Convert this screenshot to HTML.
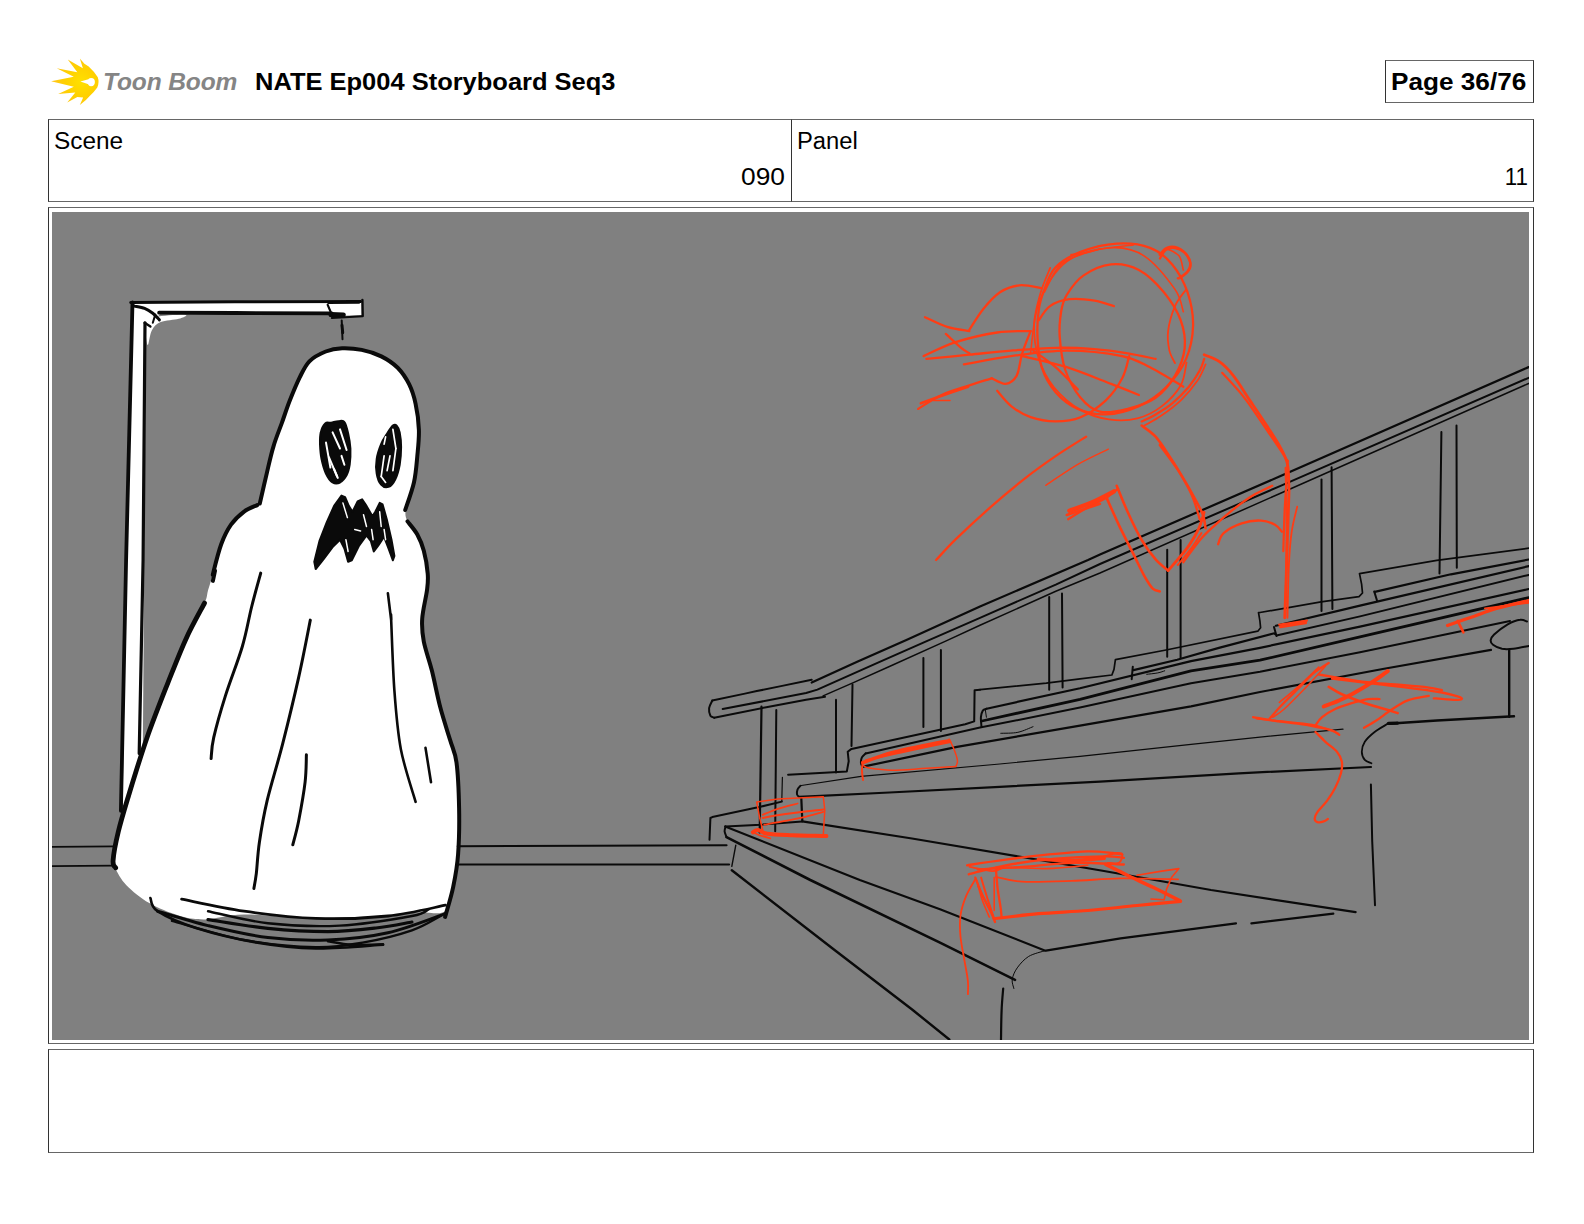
<!DOCTYPE html>
<html lang="en">
<head>
<meta charset="utf-8">
<title>NATE Ep004 Storyboard Seq3 - Page 36/76</title>
<style>
html,body{margin:0;padding:0;background:#fff;}
body{width:1584px;height:1224px;position:relative;overflow:hidden;font-family:"Liberation Sans",sans-serif;color:#000;}
.abs{position:absolute;box-sizing:border-box;}
.box{border:1px solid #333;border-top-color:#666;border-bottom-color:#666;background:#fff;}
.title{left:255px;top:68px;font-size:23.5px;font-weight:bold;line-height:28px;white-space:nowrap;transform:scaleX(1.084);transform-origin:0 0;}
.pagebox{left:1385px;top:60px;width:149px;height:43px;}
.pagebox span{position:absolute;left:5px;top:7px;font-size:24px;font-weight:bold;line-height:28px;white-space:nowrap;transform:scaleX(1.09);transform-origin:0 0;}
.lbl{font-size:23px;line-height:26px;white-space:nowrap;}
.val{font-size:23.5px;line-height:26px;white-space:nowrap;text-align:right;}
.logo-text{left:103px;top:66.5px;font-size:24.5px;font-style:italic;font-weight:bold;color:#858585;line-height:30px;white-space:nowrap;letter-spacing:-0.1px;}
svg{position:absolute;left:0;top:0;}
</style>
</head>
<body>
<svg class="abs" style="left:44px;top:52px" width="80" height="60" viewBox="0 0 1584 1188">
<defs><radialGradient id="lg" cx="0.62" cy="0.5" r="0.6"><stop offset="0" stop-color="#ffe000"/><stop offset="0.55" stop-color="#ffd000"/><stop offset="1" stop-color="#ffc51a"/></radialGradient></defs>
<path fill="url(#lg)" d="M710 130 L800 235 L885 285 Q1000 390 1065 500 Q1100 600 1055 705 Q990 800 900 875 L830 950 L710 1050 L775 900 L660 890 L460 1000 L620 800 L280 830 L590 690 L140 580 L590 490 L250 320 L660 400 L470 150 L770 320 Z"/>
<ellipse cx="935" cy="595" rx="72" ry="82" fill="#fff"/>
<path fill="#fff" d="M720 585 L880 540 L880 640 Z"/>
</svg>
<div class="abs logo-text">Toon Boom</div>
<div class="abs title">NATE Ep004 Storyboard Seq3</div>
<div class="abs box pagebox"><span>Page 36/76</span></div>

<div class="abs box" style="left:48px;top:119px;width:744px;height:83px;"></div>
<div class="abs box" style="left:791px;top:119px;width:743px;height:83px;"></div>
<div class="abs lbl" style="left:54px;top:127.5px;transform:scaleX(1.061);transform-origin:0 0;">Scene</div>
<div class="abs val" style="left:600px;width:185px;top:163.5px;transform:scaleX(1.12);transform-origin:100% 0;">090</div>
<div class="abs lbl" style="left:797px;top:127.5px;transform:scaleX(1.033);transform-origin:0 0;">Panel</div>
<div class="abs val" style="left:1340px;width:188px;top:163.5px;transform:scaleX(0.95);transform-origin:100% 0;">11</div>

<div class="abs box" style="left:48px;top:207px;width:1486px;height:837px;"></div>
<div class="abs" style="left:52px;top:212px;width:1477px;height:828px;background:#808080;"></div>
<div class="abs box" style="left:48px;top:1049px;width:1486px;height:104px;"></div>

<svg width="1584" height="1224" viewBox="0 0 1584 1224">
<defs><clipPath id="fr"><rect x="52" y="212" width="1477" height="828"/></clipPath></defs>
<g clip-path="url(#fr)" fill="none" stroke-linecap="round" stroke-linejoin="round">
<path d="M132.3 301.8 L361.7 299.9 L361.7 314.9 L332.3 316.2 L330.7 312.3 L160.7 312.9 L155.8 319.5 L146 325.4 L142.8 752.8 L122.5 808.4 L129.7 390.7Z" fill="#fff"/>
<path d="M146 325.4C147.4 320.7 149.3 318.9 155.8 317.2C162.4 315.4 181.4 314.6 185.3 314.9C189.1 315.2 182.8 317.6 178.7 318.8C174.6 320 165.2 320.2 160.7 322.1C156.3 324 154.1 326.4 151.9 330.3C149.7 334.1 148.7 345.8 147.7 345C146.7 344.2 144.7 330 146 325.4Z" fill="#fff"/>
<path d="M342.1 348.2C336.1 348.5 331.2 349.3 325.8 351.5C320.3 353.7 313.8 356.9 309.4 361.3C305.1 365.7 302.9 371.1 299.6 377.6C296.4 384.2 292.8 392.9 289.8 400.5C286.8 408.1 284.4 415.8 281.7 423.4C278.9 431 275.9 438.1 273.5 446.3C271 454.4 269.2 462.9 267 472.4C264.7 481.9 263.6 496.9 259.8 503.5C256 510 248.9 508.1 244.1 511.6C239.3 515.2 234.8 519.3 231 524.7C227.2 530.2 224.2 536.1 221.2 544.3C218.2 552.5 215.2 566.1 213 573.7C210.9 581.4 209.5 585.3 208.1 590.1C206.8 594.9 207.6 596.1 204.9 602.5C202.1 608.9 197.2 617.2 191.8 628.6C186.3 640.1 179.8 652.6 172.2 671.1C164.6 689.6 154.2 716.9 146 739.7C137.9 762.6 128.6 789.3 123.2 808.4C117.7 827.4 114.7 844.3 113.4 854.1C112 863.9 112.8 862 115 867.2C117.2 872.4 120.7 879.2 126.4 885.2C132.2 891.2 140.6 898.1 149.3 903.1C158 908.2 169.5 912.8 178.7 915.6C188 918.3 194 919.6 204.9 919.5C215.8 919.3 226.6 914.8 244.1 914.6C261.5 914.3 287.7 917.6 309.4 917.8C331.2 918.1 356.8 917.1 374.8 916.2C392.8 915.3 405.6 913.1 417.3 912.3C429 911.5 439.1 915.6 445.1 911.3C451.1 907.1 451.1 896.3 453.2 886.8C455.4 877.3 457.2 867.2 458.1 854.1C459.1 841 459.4 823.6 459.1 808.4C458.8 793.1 458 774.1 456.5 762.6C455 751.2 452.7 749 450 739.7C447.2 730.5 443.2 718.5 440.2 707.1C437.2 695.6 434.7 682 432 671.1C429.3 660.2 425.5 650.4 423.8 641.7C422.2 633 421.6 627.5 422.2 618.8C422.7 610.1 426.2 596.9 427.1 589.4C428 581.9 428.3 580.2 427.7 573.7C427.2 567.3 425.6 557.4 423.8 550.8C422.1 544.3 420 539.4 417.3 534.5C414.6 529.6 409.4 525.8 407.5 521.4C405.6 517.1 404.8 514.9 405.8 508.4C406.9 501.8 412.1 490.9 414 482.2C415.9 473.5 416.5 464.8 417.3 456.1C418.1 447.4 419.2 438.6 418.9 429.9C418.6 421.2 417.3 411.4 415.6 403.8C414 396.2 412.1 390.2 409.1 384.2C406.1 378.2 402.3 372.5 397.7 367.8C393 363.2 387.3 359.4 381.3 356.4C375.3 353.4 368.3 351.2 361.7 349.9C355.2 348.5 348.1 348 342.1 348.2Z" fill="#fff"/>
<path d="M132.5 302.5 L126.1 560 L120.9 810.8" fill="none" stroke="#0a0a0a" stroke-width="3.8"/>
<path d="M145 322.8 L143.1 560 L139.2 753.4" fill="none" stroke="#0a0a0a" stroke-width="3.2"/>
<path d="M130.7 302.5 L234.9 301.8 L360.6 301.5" fill="none" stroke="#0a0a0a" stroke-width="3"/>
<path d="M328.5 302.8 L358.9 302.5" fill="none" stroke="#0a0a0a" stroke-width="2.6"/>
<path d="M159.1 312.7 L234.9 313 L331.8 313.3" fill="none" stroke="#0a0a0a" stroke-width="3.8"/>
<path d="M331 314.6 L343.3 315" fill="none" stroke="#0a0a0a" stroke-width="5"/>
<path d="M331.8 317.9 L362.7 316.3" fill="none" stroke="#0a0a0a" stroke-width="2"/>
<path d="M362.4 299.9 L362.7 315.5" fill="none" stroke="#0a0a0a" stroke-width="2.4"/>
<path d="M327.7 304.8 L331.8 314.6" fill="none" stroke="#0a0a0a" stroke-width="2.2"/>
<path d="M134.4 306.1C136.1 306.5 141.6 307.2 144.6 308.4C147.7 309.6 150.4 311.4 152.8 313.3C155.3 315.2 158.3 318.8 159.4 319.9" fill="none" stroke="#0a0a0a" stroke-width="3"/>
<path d="M155.3 314.6 L152.8 322.8" fill="none" stroke="#0a0a0a" stroke-width="2"/>
<path d="M144.6 322.8 L150.4 326.5" fill="none" stroke="#0a0a0a" stroke-width="2.4"/>
<path d="M341.7 320.4 L342.5 339.3" fill="none" stroke="#0a0a0a" stroke-width="2"/>
<path d="M342 325.3 L342.7 332.7" fill="none" stroke="#0a0a0a" stroke-width="3"/>
<path d="M259.8 503.5C261 498.3 264.7 481.9 267 472.4C269.2 462.9 271 454.4 273.5 446.3C275.9 438.1 278.9 431 281.7 423.4C284.4 415.8 286.8 408.1 289.8 400.5C292.8 392.9 296.4 384.2 299.6 377.6C302.9 371.1 305.1 365.7 309.4 361.3C313.8 356.9 320.3 353.7 325.8 351.5C331.2 349.3 336.1 348.5 342.1 348.2C348.1 348 355.2 348.5 361.7 349.9C368.3 351.2 375.3 353.4 381.3 356.4C387.3 359.4 393 363.2 397.7 367.8C402.3 372.5 406.1 378.2 409.1 384.2C412.1 390.2 414 396.2 415.6 403.8C417.3 411.4 418.6 421.2 418.9 429.9C419.2 438.6 418.1 447.4 417.3 456.1C416.5 464.8 416 473.2 414 482.2C412 491.2 406.7 505.4 405.2 510" fill="none" stroke="#0a0a0a" stroke-width="4"/>
<path d="M257.2 505.1C255 506.2 248.4 508.4 244.1 511.6C239.7 514.9 234.8 519.3 231 524.7C227.2 530.2 224.2 536.1 221.2 544.3C218.2 552.5 214.1 569.4 213 573.7C212 578.1 215 569.3 215 570.5C214.9 571.6 213.2 579.2 212.9 580.9" fill="none" stroke="#0a0a0a" stroke-width="4"/>
<path d="M204.5 603.1C201.5 609 192.3 625.1 186.2 638.4C180.1 651.7 174.5 666.3 167.9 682.8C161.4 699.4 153.6 719 147 737.7C140.5 756.4 133.5 779.5 128.7 795.2C124 810.8 120.9 820.9 118.3 831.8C115.7 842.6 113.5 854.5 113.1 860.5C112.6 866.5 115.2 866.6 115.7 867.8" fill="none" stroke="#0a0a0a" stroke-width="4.8"/>
<path d="M407.5 521.4C409.1 523.6 414.6 529.6 417.3 534.5C420 539.4 422.1 544.3 423.8 550.8C425.6 557.4 427.2 567.3 427.7 573.7C428.3 580.2 428 581.9 427.1 589.4C426.2 596.9 422.7 610.1 422.2 618.8C421.6 627.5 422.2 633 423.8 641.7C425.5 650.4 429.3 660.2 432 671.1C434.7 682 437.2 695.6 440.2 707.1C443.2 718.5 447.2 730.5 450 739.7C452.7 749 455 751.2 456.5 762.6C458 774.1 458.8 793.1 459.1 808.4C459.4 823.6 459.1 841 458.1 854.1C457.2 867.2 455.4 876.3 453.2 886.8C451.1 897.3 446.4 911.9 445.1 916.9" fill="none" stroke="#0a0a0a" stroke-width="4"/>
<path d="M181.6 899.2C192 901.2 221.6 908 244 911.2C266.3 914.4 291.9 917.6 315.9 918.4C339.9 919.2 366.3 918.2 387.9 916C409.5 913.8 435.9 907 445.5 905.2" fill="none" stroke="#0a0a0a" stroke-width="2.8"/>
<path d="M208 911.2C218 913.2 246 920.8 267.9 923.2C289.9 925.6 315.9 926.8 339.9 925.6C363.9 924.4 397.1 918.7 411.9 916C426.7 913.3 425.9 910.4 428.7 909.3" fill="none" stroke="#0a0a0a" stroke-width="2.4"/>
<path d="M208 919.6C218 921 248 926.4 267.9 928.4C287.9 930.4 309.9 931.6 327.9 931.6C345.9 931.5 361.9 929.6 375.9 928C389.9 926.4 405.9 923 411.9 922" fill="none" stroke="#0a0a0a" stroke-width="3.2"/>
<path d="M150.4 898C151.6 900.2 150 906.2 157.6 911.2C165.2 916.2 179.6 922.8 196 928C212.4 933.2 236 939 256 942.4C275.9 945.8 294.7 948 315.9 948.4C337.1 948.8 371.9 945.4 383.1 944.8" fill="none" stroke="#0a0a0a" stroke-width="2.6"/>
<path d="M157.6 911.2C166 913.6 189.6 921.2 208 925.6C226.4 930 248 935.2 267.9 937.6C287.9 940 307.9 940.8 327.9 940C347.9 939.2 368.3 937.2 387.9 932.8C407.5 928.4 435.9 916.8 445.5 913.6" fill="none" stroke="#0a0a0a" stroke-width="3"/>
<path d="M172 920.8C184 924 220 935.6 244 940C267.9 944.4 295.9 946.8 315.9 947.2C335.9 947.6 347.9 945.2 363.9 942.4C379.9 939.6 399.1 934.8 411.9 930.4C424.7 926 435.9 918.4 440.7 916" fill="none" stroke="#0a0a0a" stroke-width="2.4"/>
<path d="M327.9 941.2C331.9 941.8 342.7 944.2 351.9 944.8C361.1 945.3 377.9 944.4 383.1 944.3" fill="none" stroke="#0a0a0a" stroke-width="2.4"/>
<path d="M260.7 573.1C259.2 578.7 254.6 594.8 251.6 607C248.5 619.2 246.8 631.4 242.4 646.2C238.1 661 230.2 680.6 225.4 695.9C220.6 711.1 216.1 727.2 213.7 737.7C211.3 748.1 211.5 755.1 211.1 758.6" fill="none" stroke="#0a0a0a" stroke-width="3"/>
<path d="M310.3 620.1C308.4 629.7 303.2 657.1 298.6 677.6C294 698.1 288.1 722.4 282.9 742.9C277.7 763.4 271.2 783.8 267.2 800.4C263.3 816.9 261.2 830 259.4 842.2C257.6 854.4 257.2 865.9 256.3 873.6C255.3 881.3 254.3 886 253.9 888.4" fill="none" stroke="#0a0a0a" stroke-width="3"/>
<path d="M387.9 593.3C388.4 597.7 390.6 615.2 391.1 619.5C391.7 623.7 390.6 606.9 391.1 618.8C391.7 630.7 392.8 668.9 394.4 690.7C396 712.5 397.4 731 400.9 749.5C404.5 768.1 413.2 793.1 415.6 801.8" fill="none" stroke="#0a0a0a" stroke-width="2.6"/>
<path d="M306.4 754.7C306.2 759.2 306.4 771 305.1 782.1C303.8 793.2 300.6 810.8 298.6 821.3C296.5 831.8 293.8 840.9 292.8 844.8" fill="none" stroke="#0a0a0a" stroke-width="3"/>
<path d="M425.5 747.9 L431 782.2" fill="none" stroke="#0a0a0a" stroke-width="2.6"/>
<path d="M325.3 423.5C323.6 425.1 321.7 428.9 320.9 432.4C320 435.8 320 439.7 320.1 444.1C320.3 448.5 320.6 453.9 321.6 458.8C322.6 463.7 324.2 469.6 326 473.5C327.9 477.5 330.3 480.9 332.6 482.4C335 483.8 337.7 483.6 340 482.4C342.3 481.1 345 477.9 346.6 475C348.2 472.1 348.9 469.1 349.6 464.7C350.2 460.3 350.5 453.7 350.3 448.5C350 443.4 349.1 438.2 348.1 433.8C347.1 429.4 346 424.1 344.4 422.1C342.8 420 340.7 421.2 338.5 421.3C336.3 421.4 333.4 422.4 331.2 422.8C329 423.2 327 421.9 325.3 423.5Z" fill="#0a0a0a" stroke="#0a0a0a" stroke-width="2.2"/>
<path d="M392.9 425.7C391.3 427.1 389 430.8 387.1 433.8C385.1 436.9 382.9 440 381.2 444.1C379.5 448.3 377.5 453.9 376.8 458.8C376 463.7 376 469.2 376.8 473.5C377.5 477.8 379.2 482.4 381.2 484.6C383.1 486.8 386.2 487.6 388.5 486.8C390.9 485.9 393.3 483.1 395.1 479.4C397 475.7 398.6 470.1 399.6 464.7C400.5 459.3 401 452.5 401 447.1C401 441.7 400.3 435.9 399.6 432.4C398.8 428.8 397.7 426.8 396.6 425.7C395.5 424.6 394.5 424.4 392.9 425.7Z" fill="#0a0a0a" stroke="#0a0a0a" stroke-width="2.2"/>
<path d="M341.5 495.6 L334.1 505.9 L326.8 522.1 L319.4 541.2 L314.3 561.8 L315.7 569.1 L323.8 558.8 L332.6 547.1 L340 539.7 L344.4 548.5 L348.1 561.8 L351.8 560.3 L359.1 545.6 L366.5 535.3 L370.9 541.2 L373.8 551.5 L378.2 545.6 L384.1 536.8 L388.5 548.5 L392.9 560.3 L394.4 555.9 L391.5 539.7 L387.1 520.6 L382.6 504.4 L379.7 502.9 L375.3 511.8 L372.4 516.2 L366.5 505.9 L362.1 499.3 L357.6 501.5 L352.5 511.8 L348.8 505.9 L345.1 497.1Z" fill="#0a0a0a" stroke="#0a0a0a" stroke-width="2"/>
<path d="M326 442.6 L330.4 467.6" fill="none" stroke="#fff" stroke-width="2"/>
<path d="M329 457.4 L337.1 476.5" fill="none" stroke="#fff" stroke-width="2"/>
<path d="M332.6 432.4 L340 448.5" fill="none" stroke="#fff" stroke-width="2"/>
<path d="M340 429.4 L346.6 450" fill="none" stroke="#fff" stroke-width="2"/>
<path d="M341.5 455.9 L344.4 464.7" fill="none" stroke="#fff" stroke-width="2"/>
<path d="M334.1 469.1 L337.8 477.9" fill="none" stroke="#fff" stroke-width="2"/>
<path d="M384.1 455.9 L381.2 476.5" fill="none" stroke="#fff" stroke-width="1.7"/>
<path d="M381.2 476.5 L385.6 482.4" fill="none" stroke="#fff" stroke-width="1.7"/>
<path d="M390 455.9 L387.1 470.6" fill="none" stroke="#fff" stroke-width="1.7"/>
<path d="M392.9 429.4 L395.9 448.5" fill="none" stroke="#fff" stroke-width="1.7"/>
<path d="M395.9 448.5 L392.9 470.6" fill="none" stroke="#fff" stroke-width="1.7"/>
<path d="M385.6 436.8 L384.1 444.1" fill="none" stroke="#fff" stroke-width="1.7"/>
<path d="M342.9 502.9 L347.4 517.6" fill="none" stroke="#fff" stroke-width="1.5"/>
<path d="M345.9 539.7 L348.1 551.5" fill="none" stroke="#fff" stroke-width="1.5"/>
<path d="M363.5 514.7 L366.5 526.5" fill="none" stroke="#fff" stroke-width="1.5"/>
<path d="M371.6 529.4 L373.1 539.7" fill="none" stroke="#fff" stroke-width="1.5"/>
<path d="M379.7 511.8 L381.2 526.5" fill="none" stroke="#fff" stroke-width="1.5"/>
<path d="M354.7 529.4 L360.6 530.9" fill="none" stroke="#fff" stroke-width="1.5"/>
<path d="M384.1 529.4 L385.6 539.7" fill="none" stroke="#fff" stroke-width="1.5"/>
<path d="M51.9 846.9 L115 846.3" fill="none" stroke="#0a0a0a" stroke-width="1.8"/>
<path d="M51.9 866.2 L113.4 865.6" fill="none" stroke="#0a0a0a" stroke-width="1.8"/>
<path d="M457.7 846.2 L591.5 845.7 L726.6 845.2" fill="none" stroke="#0a0a0a" stroke-width="2"/>
<path d="M457.7 864.6 L591.5 864.6 L729.1 864.6" fill="none" stroke="#0a0a0a" stroke-width="2"/>
<path d="M712.3 700.6C719.7 699 740.2 694.6 756.8 691.1C773.4 687.7 802.6 681.7 811.7 679.8" fill="none" stroke="#0a0a0a" stroke-width="2"/>
<path d="M811.7 682.6 L857.2 661.8 L906.4 640 L980 606.4 L1088 560 L1100 554.5 L1280 476.3 L1528.6 367.1" fill="none" stroke="#0a0a0a" stroke-width="2.2"/>
<path d="M712.3 700.6C711.8 701.9 709.4 705.7 709.1 708.2C708.8 710.7 709.6 714.2 710.4 715.8C711.3 717.3 713.6 717.3 714.2 717.7" fill="none" stroke="#0a0a0a" stroke-width="2"/>
<path d="M722.7 709.1 L806.1 693 L817.4 689.6 L878 662.7 L927.3 640.9 L980 617.8 L1055.8 584.6 L1100 564 L1280 486.1 L1528.6 377.8" fill="none" stroke="#0a0a0a" stroke-width="2"/>
<path d="M714.2 717.7 L766.3 707.2 L806.1 699.7 L825 696.8" fill="none" stroke="#0a0a0a" stroke-width="2"/>
<path d="M823.1 695.9 L853.4 682.6 L889.4 666.5 L946.2 640.9 L980 625.3 L1055.8 591.2 L1100 573 L1280 493.5 L1528.6 383.5" fill="none" stroke="#0a0a0a" stroke-width="1.5"/>
<path d="M761.5 706.5 L759.7 832.5" fill="none" stroke="#0a0a0a" stroke-width="2.2"/>
<path d="M776.3 710 L775.2 831.3" fill="none" stroke="#0a0a0a" stroke-width="2"/>
<path d="M836 699.7 L836 772.6" fill="none" stroke="#0a0a0a" stroke-width="2"/>
<path d="M852.5 684.5 L851.5 746" fill="none" stroke="#0a0a0a" stroke-width="2"/>
<path d="M923.4 658 L923.4 727" fill="none" stroke="#0a0a0a" stroke-width="2"/>
<path d="M940.9 650 L940.9 731" fill="none" stroke="#0a0a0a" stroke-width="2"/>
<path d="M1049.2 597 L1049.2 689.7" fill="none" stroke="#0a0a0a" stroke-width="2"/>
<path d="M1062 593.6 L1062.6 687.5" fill="none" stroke="#0a0a0a" stroke-width="2"/>
<path d="M1167.2 549.7 L1167.2 656.7" fill="none" stroke="#0a0a0a" stroke-width="2"/>
<path d="M1180.6 540 L1180.6 658" fill="none" stroke="#0a0a0a" stroke-width="2"/>
<path d="M1321.5 479.6 L1321.5 611" fill="none" stroke="#0a0a0a" stroke-width="2"/>
<path d="M1331.6 467.3 L1332.4 609" fill="none" stroke="#0a0a0a" stroke-width="2"/>
<path d="M1441.4 432 L1439.5 573.5" fill="none" stroke="#0a0a0a" stroke-width="2"/>
<path d="M1456.5 425.4 L1456.8 567.8" fill="none" stroke="#0a0a0a" stroke-width="2"/>
<path d="M1528.8 548.2 L1436.8 560.3 L1359.5 573.6 L1361.6 584.2 L1362.5 593 L1359 596.6 L1321 601.9 L1260 612.5 L1258.5 612.5 L1259.9 620.8 L1260.6 627.8 L1257.8 631.2 L1166.1 650 L1115.4 659.7 L1114 669.4 L1111.9 675 L1080 678.9 L1046.3 683.1 L980 689.7" fill="none" stroke="#0a0a0a" stroke-width="1.7"/>
<path d="M980 689.7 L974.6 690.2 L974.2 721.4 L965.2 724.3 L851.5 748.9 L847.7 751.7 L848.7 761.2 L846.8 771.6 L788.1 774.8" fill="none" stroke="#0a0a0a" stroke-width="2"/>
<path d="M782.4 777.3 L781.8 801" fill="none" stroke="#0a0a0a" stroke-width="1.2"/>
<path d="M781.8 801.6 L756.8 807.6 L712.3 817.1 L710.4 818 L709.5 839.8" fill="none" stroke="#0a0a0a" stroke-width="2"/>
<path d="M1132.8 666.7 L1131.7 679.2" fill="none" stroke="#0a0a0a" stroke-width="2"/>
<path d="M1274 627 L1276.5 636" fill="none" stroke="#0a0a0a" stroke-width="2"/>
<path d="M1374.2 591.4 L1377 600.5" fill="none" stroke="#0a0a0a" stroke-width="2"/>
<path d="M1133.5 670.1 L1177.2 659.7 L1218.9 647.9 L1274.4 633.3 L1275 634" fill="none" stroke="#0a0a0a" stroke-width="2.2"/>
<path d="M1276.5 635.5 L1360 616.4 L1528.8 574.9" fill="none" stroke="#0a0a0a" stroke-width="2"/>
<path d="M1275.9 625.7 L1360 605.6 L1528.8 566.1" fill="none" stroke="#0a0a0a" stroke-width="2.2"/>
<path d="M1374.8 591.9 L1450.9 574.3 L1528.8 559.5" fill="none" stroke="#0a0a0a" stroke-width="2.2"/>
<path d="M986.6 708.7 L1080 688.2 L1191 661.1 L1260 647.8 L1360 626.6 L1528.8 589" fill="none" stroke="#0a0a0a" stroke-width="2.2"/>
<path d="M981.9 721 L1080 699.3 L1191 670.8 L1260 660.2 L1360 636.8 L1528.8 597.6" fill="none" stroke="#0a0a0a" stroke-width="2.8"/>
<path d="M865.7 753.5 L980 727.6 L1080 707.6 L1191 683.3 L1260 671.7 L1360 652.2 L1510 620.9" fill="none" stroke="#0a0a0a" stroke-width="2"/>
<path d="M863 766.7 L957 746.8 L1080 725.7 L1191 706.3 L1260 692 L1382.7 669 L1491 649.9" fill="none" stroke="#0a0a0a" stroke-width="2.2"/>
<path d="M801.3 785.5 L861 776.4 L999.8 764 L1080 756.3 L1191 744.4 L1260 737.1 L1343 729.1" fill="none" stroke="#0a0a0a" stroke-width="1.2"/>
<path d="M799.4 796.8 L889.4 792.5 L999.8 786.8 L1100 781.7 L1238.9 773.3 L1371 767" fill="none" stroke="#0a0a0a" stroke-width="2.2"/>
<path d="M800.4 785.8C799.9 786.5 798.1 788.2 797.5 789.6C797 791 796.7 793.1 797 794.4C797.3 795.6 799 796.7 799.4 797.2" fill="none" stroke="#0a0a0a" stroke-width="2"/>
<path d="M865.7 753.3C865.1 754 862.7 755.8 861.9 757.4C861.1 759.1 860.8 761.5 861 763.1C861.1 764.7 862.6 766.3 862.9 766.9" fill="none" stroke="#0a0a0a" stroke-width="2"/>
<path d="M986.6 708.7C986 709 983.8 709.1 982.8 710.6C981.9 712 981.2 714.5 980.9 717.2C980.7 719.9 981.4 725.1 981.5 726.7" fill="none" stroke="#0a0a0a" stroke-width="2"/>
<path d="M985.3 709.6 L986.4 717.2" fill="none" stroke="#0a0a0a" stroke-width="1"/>
<path d="M1000.8 733.3C1003.7 733.1 1012.5 733.5 1017.9 732.3C1023.2 731.2 1030.5 727.6 1033 726.7" fill="none" stroke="#0a0a0a" stroke-width="1"/>
<path d="M1146.7 674.3C1148.5 674.1 1154.8 673.5 1157.8 672.9C1160.8 672.3 1163.6 671.2 1164.7 670.8" fill="none" stroke="#0a0a0a" stroke-width="1"/>
<path d="M801.3 798.1 L802.3 820.9" fill="none" stroke="#0a0a0a" stroke-width="2.2"/>
<path d="M725.6 826.6 L760.6 824.7 L802.3 821.4" fill="none" stroke="#0a0a0a" stroke-width="2"/>
<path d="M802.3 821.4 L912 838.5 L1022 857 L1104 871 L1211 890 L1355.6 912.2" fill="none" stroke="#0a0a0a" stroke-width="2.2"/>
<path d="M725.6 826.6C725.4 827.3 724.5 829.6 724.6 831.3C724.8 833 726.2 836 726.5 837" fill="none" stroke="#0a0a0a" stroke-width="2"/>
<path d="M725.2 826.5 L859.8 880 L940 909.3 L1044.7 950.4" fill="none" stroke="#0a0a0a" stroke-width="2.2"/>
<path d="M1045.9 950.7 L1120.6 938.4 L1236 923.3" fill="none" stroke="#0a0a0a" stroke-width="2.2"/>
<path d="M1251.4 923.3 L1333.3 913.6" fill="none" stroke="#0a0a0a" stroke-width="2.2"/>
<path d="M726.5 837.1 L810.3 880 L940 942.6 L1015 979.8" fill="none" stroke="#0a0a0a" stroke-width="2.6"/>
<path d="M731.8 870.3 L832.6 948.5 L912.1 1009.5 L949.3 1039.5" fill="none" stroke="#0a0a0a" stroke-width="2.4"/>
<path d="M735.8 845.1 L731.8 866.3" fill="none" stroke="#0a0a0a" stroke-width="1.4"/>
<path d="M1045.1 950.7C1042.4 951.6 1033.3 953.6 1028.7 956.4C1024 959.3 1019.9 964.1 1017.2 967.9C1014.4 971.8 1012.8 976 1012.2 979.4C1011.7 982.8 1013.6 987 1013.9 988.5" fill="none" stroke="#0a0a0a" stroke-width="1"/>
<path d="M1003.2 988.5C1002.9 992.2 1001.9 1002 1001.6 1010.6C1001.2 1019.2 1001.1 1035.1 1001 1040" fill="none" stroke="#0a0a0a" stroke-width="2.2"/>
<path d="M1527 621.5C1525.9 621.2 1523.4 619.3 1520.2 619.8C1517 620.2 1512.1 621.9 1507.7 624.3C1503.4 626.8 1496.9 631.9 1494.1 634.5C1491.2 637.2 1490.9 638.5 1490.7 640.2C1490.5 641.9 1491.1 643.4 1493 644.8C1494.8 646.2 1498.6 648.1 1502 648.8C1505.5 649.4 1509 649.2 1513.4 648.8C1517.9 648.3 1526.2 646.4 1528.8 645.9" fill="none" stroke="#0a0a0a" stroke-width="2"/>
<path d="M1509.2 650.5 L1509.2 716.8" fill="none" stroke="#0a0a0a" stroke-width="2.4"/>
<path d="M1514 716.2 L1437 720.5 L1387.8 723.7" fill="none" stroke="#0a0a0a" stroke-width="2.4"/>
<path d="M1387.8 723.7C1385.6 725.1 1378.5 728.9 1374.6 732C1370.8 735 1366.9 738.5 1364.8 741.8C1362.7 745.1 1361.8 748.6 1361.8 751.7C1361.8 754.7 1363.2 758 1364.8 759.9C1366.4 761.8 1370.3 762.6 1371.4 763.2" fill="none" stroke="#0a0a0a" stroke-width="1.8"/>
<path d="M1370.9 784.5 L1372.2 841 L1375 905.3" fill="none" stroke="#0a0a0a" stroke-width="2"/>
<path d="M1388.6 723.4 L1397.6 723.1" fill="none" stroke="#0a0a0a" stroke-width="3.2"/>
<path d="M1044.4 289.4C1047.2 282.5 1049.5 273.5 1055.6 267.2C1061.6 261 1070.4 255.9 1080.6 251.9C1090.7 248 1105.1 244.3 1116.7 243.6C1128.2 242.9 1140.7 244.3 1150 247.8C1159.3 251.2 1166 257 1172.2 264.4C1178.5 271.9 1184 282 1187.5 292.2C1191 302.4 1193.3 314.4 1193.1 325.6C1192.8 336.7 1190.5 348.7 1186.1 358.9C1181.7 369.1 1174.5 378.8 1166.7 386.7C1158.8 394.5 1149.1 401.5 1138.9 406.1C1128.7 410.7 1115.7 414 1105.6 414.4C1095.4 414.9 1086.1 412.6 1077.8 408.9C1069.4 405.2 1061.6 399.2 1055.6 392.2C1049.5 385.3 1044.7 376.5 1041.7 367.2C1038.7 358 1038 346.4 1037.5 336.7C1037 326.9 1037.7 316.8 1038.9 308.9C1040 301 1041.7 296.4 1044.4 289.4Z" fill="none" stroke="#ff3c14" stroke-width="2.3"/>
<path d="M1066.7 295C1070.4 289 1075.9 280.6 1083.3 275.6C1090.7 270.5 1101.9 265.4 1111.1 264.4C1120.4 263.5 1130.1 265.4 1138.9 270C1147.7 274.6 1156.9 283.9 1163.9 292.2C1170.8 300.6 1177.1 310.7 1180.6 320C1184 329.3 1185.6 338.5 1184.7 347.8C1183.8 357 1179.9 367.2 1175 375.6C1170.1 383.9 1163.4 392.2 1155.6 397.8C1147.7 403.3 1137 406.6 1127.8 408.9C1118.5 411.2 1107.9 413.5 1100 411.7C1092.1 409.8 1086.3 404.7 1080.6 397.8C1074.8 390.8 1068.8 380.2 1065.3 370C1061.8 359.8 1060.4 346.4 1059.7 336.7C1059 326.9 1060 318.6 1061.1 311.7C1062.3 304.7 1063 301 1066.7 295Z" fill="none" stroke="#ff3c14" stroke-width="2.3"/>
<path d="M1030.6 353.3C1031.9 345 1032.9 318.6 1038.9 303.3C1044.9 288.1 1054.6 270.9 1066.7 261.7C1078.7 252.4 1098.1 248.7 1111.1 247.8C1124.1 246.9 1133.8 249.2 1144.4 256.1C1155.1 263.1 1168.5 280.2 1175 289.4C1181.5 298.7 1181.9 308 1183.3 311.7" fill="none" stroke="#ff3c14" stroke-width="1.6"/>
<path d="M1186.1 289.4C1184.3 292.2 1178 299.2 1175 306.1C1172 313.1 1169 323.7 1168.1 331.1C1167.1 338.5 1168.3 345.2 1169.4 350.6C1170.6 355.9 1174.1 361 1175 363.1" fill="none" stroke="#ff3c14" stroke-width="1.8"/>
<path d="M1044.4 292.2C1047.2 287.6 1052.8 271.4 1061.1 264.4C1069.4 257.5 1082.4 253.8 1094.4 250.6C1106.5 247.3 1126.9 245.9 1133.3 245" fill="none" stroke="#ff3c14" stroke-width="1.5"/>
<path d="M1159.7 254.7C1160.9 253.6 1163.7 248.9 1166.7 247.8C1169.7 246.6 1174.3 246.4 1177.8 247.8C1181.2 249.2 1185.4 252.9 1187.5 256.1C1189.6 259.4 1191 264 1190.3 267.2C1189.6 270.5 1185.4 273.7 1183.3 275.6C1181.2 277.4 1178.7 277.9 1177.8 278.3" fill="none" stroke="#ff3c14" stroke-width="2.3"/>
<path d="M1168.1 249.2C1169.9 250.3 1176.6 252.6 1179.2 256.1C1181.7 259.6 1182.6 267.7 1183.3 270" fill="none" stroke="#ff3c14" stroke-width="1.6"/>
<path d="M969.4 329.7C971.8 326.2 978.2 315.1 983.3 308.9C988.4 302.6 994 296.2 1000 292.2C1006 288.3 1012.5 286 1019.4 285.3C1026.4 284.6 1038 287.6 1041.7 288.1" fill="none" stroke="#ff3c14" stroke-width="2.3"/>
<path d="M925 317.2C928.7 318.8 939.8 324.6 947.2 326.9C954.6 329.3 965.7 330.4 969.4 331.1" fill="none" stroke="#ff3c14" stroke-width="2.3"/>
<path d="M945.8 333.9C948.4 336.2 957.2 344.5 961.1 347.8C965 351 968.1 352.4 969.4 353.3" fill="none" stroke="#ff3c14" stroke-width="2.3"/>
<path d="M923.6 356.1C928.9 353.8 943.3 346.2 955.6 342.2C967.8 338.3 984.7 334.4 997.2 332.5C1009.7 330.6 1025 331.3 1030.6 331.1" fill="none" stroke="#ff3c14" stroke-width="2.3"/>
<path d="M926.4 358.9C933.6 358.2 955.3 356.1 969.4 354.7C983.6 353.3 996.8 351.7 1011.1 350.6C1025.5 349.4 1041.7 348 1055.6 347.8C1069.4 347.5 1082.4 348.2 1094.4 349.2C1106.5 350.1 1117.6 351.7 1127.8 353.3C1138 355 1150.9 358 1155.6 358.9" fill="none" stroke="#ff3c14" stroke-width="2.3"/>
<path d="M963.9 364.4C971.8 363.1 994 358.4 1011.1 356.1C1028.2 353.8 1048.1 350.6 1066.7 350.6C1085.2 350.6 1108.3 353.3 1122.2 356.1C1136.1 358.9 1139.8 362.1 1150 367.2C1160.2 372.3 1177.8 383.4 1183.3 386.7" fill="none" stroke="#ff3c14" stroke-width="2.3"/>
<path d="M1030.6 331.1C1029.2 334.8 1024.5 345.9 1022.2 353.3C1019.9 360.7 1019.4 370.5 1016.7 375.6C1013.9 380.6 1009.7 383.4 1005.6 383.9C1001.4 384.4 994 379.3 991.7 378.3" fill="none" stroke="#ff3c14" stroke-width="2.3"/>
<path d="M991.7 378.3C988 379.5 977.8 382.5 969.4 385.3C961.1 388.1 950.2 391.1 941.7 395C933.1 398.9 922 406.6 918.1 408.9" fill="none" stroke="#ff3c14" stroke-width="2.3"/>
<path d="M968.1 386.7C962.7 388.5 944 395 936.1 397.8C928.2 400.6 923.4 402.4 920.8 403.3" fill="none" stroke="#ff3c14" stroke-width="2.6"/>
<path d="M933.3 400.6 L950 400.6" fill="none" stroke="#ff3c14" stroke-width="1.5"/>
<path d="M997.2 390.8C999.5 393.4 1005.6 401.7 1011.1 406.1C1016.7 410.5 1023.1 414.7 1030.6 417.2C1038 419.8 1047.2 421.4 1055.6 421.4C1063.9 421.4 1072.2 420.7 1080.6 417.2C1088.9 413.8 1098.6 407 1105.6 400.6C1112.5 394.1 1118.3 385.7 1122.2 378.3C1126.2 370.9 1128 359.8 1129.2 356.1" fill="none" stroke="#ff3c14" stroke-width="2.3"/>
<path d="M1033.3 350.6C1037 353.3 1048.1 360.7 1055.6 367.2C1063 373.7 1074.1 385.7 1077.8 389.4" fill="none" stroke="#ff3c14" stroke-width="2.3"/>
<path d="M1038.9 320C1040.7 317.7 1044.9 309.6 1050 306.1C1055.1 302.6 1062 300.1 1069.4 299.2C1076.9 298.2 1087 299.4 1094.4 300.6C1101.9 301.7 1110.6 305.2 1113.9 306.1" fill="none" stroke="#ff3c14" stroke-width="2.3"/>
<path d="M1022.2 356.1C1029.6 358 1051.9 362.6 1066.7 367.2C1081.5 371.9 1099.1 379.3 1111.1 383.9C1123.1 388.5 1134.3 393.1 1138.9 395" fill="none" stroke="#ff3c14" stroke-width="2.3"/>
<path d="M1204.2 354.7C1206.7 355.9 1214.6 358.2 1219.4 361.7C1224.3 365.1 1228.2 369.1 1233.3 375.6C1238.4 382 1244.4 392.2 1250 400.6C1255.6 408.9 1261.6 417.7 1266.7 425.6C1271.8 433.4 1277.1 441.3 1280.6 447.8C1284 454.3 1286.1 458 1287.5 464.4C1288.9 470.9 1288.7 481.5 1288.9 486.7C1289.1 491.9 1289.1 487.1 1288.9 495.6C1288.7 504 1288 523.3 1287.5 537.2C1287 551.1 1286.6 565.5 1286.1 578.9C1285.6 592.3 1285 611.3 1284.7 617.8" fill="none" stroke="#ff3c14" stroke-width="2.8"/>
<path d="M1222.2 372.8C1225.9 376.9 1236.6 387.6 1244.4 397.8C1252.3 408 1262.5 423.7 1269.4 433.9C1276.4 444.1 1283.1 453.7 1286.1 458.9C1289.1 464.1 1287.7 456.6 1287.5 465C1287.3 473.4 1285.4 495.1 1284.7 509.4C1284 523.8 1283.6 544.2 1283.3 551.1" fill="none" stroke="#ff3c14" stroke-width="2.2"/>
<path d="M1297.2 506.7C1296.3 510.8 1293.1 521.9 1291.7 531.7C1290.3 541.4 1289.6 550.6 1288.9 565C1288.2 579.4 1287.7 609 1287.5 617.8" fill="none" stroke="#ff3c14" stroke-width="1.8"/>
<path d="M1204.2 358.9C1203.5 360.7 1202.5 365.4 1200 370C1197.5 374.6 1193.5 381.1 1188.9 386.7C1184.3 392.2 1177.8 398.7 1172.2 403.3C1166.7 408 1160.6 411.4 1155.6 414.4C1150.5 417.5 1144 420.2 1141.7 421.4" fill="none" stroke="#ff3c14" stroke-width="2.3"/>
<path d="M1141.7 425.6C1144 427.4 1150.9 431.6 1155.6 436.7C1160.2 441.8 1164.8 449.2 1169.4 456.1C1174.1 463.1 1179.2 471.4 1183.3 478.3C1187.5 485.3 1191.2 491.8 1194.4 497.8C1197.7 503.8 1200.9 509.4 1202.8 514.4C1204.6 519.5 1205.1 526 1205.6 528.3" fill="none" stroke="#ff3c14" stroke-width="2.6"/>
<path d="M1159.7 445C1162.7 449.2 1172.5 461.7 1177.8 470C1183.1 478.3 1188 486.7 1191.7 495C1195.4 503.3 1198.6 515.8 1200 520" fill="none" stroke="#ff3c14" stroke-width="2.2"/>
<path d="M1086.1 436.7C1081 439.9 1065.7 449.2 1055.6 456.1C1045.4 463.1 1035.6 470 1025 478.3C1014.4 486.7 1003.2 495.9 991.7 506.1C980.1 516.3 964.8 530.5 955.6 539.4C946.3 548.4 939.4 556.6 936.1 560" fill="none" stroke="#ff3c14" stroke-width="2.3"/>
<path d="M1108.3 449.2C1103.2 451.7 1088.2 458.4 1077.8 464.4C1067.4 470.5 1051.2 481.8 1045.8 485.3" fill="none" stroke="#ff3c14" stroke-width="1.5"/>
<path d="M1068.1 519.2C1071.5 517.1 1082.6 510.1 1088.9 506.7C1095.1 503.2 1100.7 501.3 1105.6 498.3C1110.4 495.3 1116 490.2 1118.1 488.6" fill="none" stroke="#ff3c14" stroke-width="2.3"/>
<path d="M1069.4 510.8C1073.1 509.4 1084.3 505.7 1091.7 502.5C1099.1 499.3 1110.2 493.2 1113.9 491.4" fill="none" stroke="#ff3c14" stroke-width="4.4"/>
<path d="M1066.7 515 L1100 503.9" fill="none" stroke="#ff3c14" stroke-width="2.4"/>
<path d="M1105.6 495.6C1107.9 500.6 1114.8 516.4 1119.4 526.1C1124.1 535.8 1129.2 545.6 1133.3 553.9C1137.5 562.2 1141.2 570.3 1144.4 576.1C1147.7 581.9 1150.2 586.1 1152.8 588.6C1155.3 591.2 1158.6 590.9 1159.7 591.4" fill="none" stroke="#ff3c14" stroke-width="2.6"/>
<path d="M1116.7 485.8C1118.5 490.2 1123.6 503.2 1127.8 512.2C1131.9 521.2 1137 532.1 1141.7 540C1146.3 547.9 1151.2 554.4 1155.6 559.4C1160 564.5 1166 568.7 1168.1 570.6" fill="none" stroke="#ff3c14" stroke-width="2.6"/>
<path d="M1168.1 570.6C1169.7 568.7 1174.3 563.6 1177.8 559.4C1181.2 555.3 1185.4 550.6 1188.9 545.6C1192.4 540.5 1196.1 534.4 1198.6 528.9C1201.2 523.3 1203.2 515 1204.2 512.2" fill="none" stroke="#ff3c14" stroke-width="2.8"/>
<path d="M1272.2 485.8C1269 487.5 1259.3 491.6 1252.8 495.6C1246.3 499.5 1239.8 504.4 1233.3 509.4C1226.9 514.5 1219.4 521 1213.9 526.1C1208.3 531.2 1205.1 534 1200 540C1194.9 546 1186.1 558.5 1183.3 562.2" fill="none" stroke="#ff3c14" stroke-width="2.3"/>
<path d="M1218.1 544.2C1219 542.3 1219.7 536.5 1223.6 533.1C1227.5 529.6 1235.4 525.4 1241.7 523.3C1247.9 521.2 1255.6 520.3 1261.1 520.6C1266.7 520.8 1271.5 522.9 1275 524.7C1278.5 526.6 1280.8 530.5 1281.9 531.7" fill="none" stroke="#ff3c14" stroke-width="2.3"/>
<path d="M1279.2 624.7C1280.8 624.5 1284.3 624 1288.9 623.3C1293.5 622.6 1303.9 621 1306.9 620.6" fill="none" stroke="#ff3c14" stroke-width="2.2"/>
<path d="M1280.6 626.7 L1305.6 622.8" fill="none" stroke="#ff3c14" stroke-width="3"/>
<path d="M1447.5 625.5C1451.9 623.9 1465.5 619.2 1473.6 616.4C1481.8 613.5 1487.2 611.1 1496.4 608.4C1505.5 605.8 1523.4 601.8 1528.8 600.5" fill="none" stroke="#ff3c14" stroke-width="3.2"/>
<path d="M1485 608.4 L1528.8 602.7" fill="none" stroke="#ff3c14" stroke-width="2"/>
<path d="M1457.7 620.9 L1463.4 632.3" fill="none" stroke="#ff3c14" stroke-width="2.6"/>
<path d="M1328.7 663C1326.2 664.6 1319.1 668.5 1313.9 672.8C1308.7 677.2 1302.9 683.8 1297.5 689.3C1292 694.7 1285.7 700.8 1281.1 705.7C1276.4 710.6 1271.5 716.6 1269.6 718.8" fill="none" stroke="#ff3c14" stroke-width="2.3"/>
<path d="M1318.8 667.1C1315.8 670 1307.3 678.5 1300.8 684.3C1294.2 690.2 1283 699.4 1279.4 702.4" fill="none" stroke="#ff3c14" stroke-width="1.6"/>
<path d="M1325.4 666.3C1322.1 669.8 1312.5 680.5 1305.7 687.6C1298.8 694.7 1289.8 704 1284.3 709C1278.9 713.9 1274.8 715.8 1272.8 717.2" fill="none" stroke="#ff3c14" stroke-width="1.6"/>
<path d="M1253.1 717.2C1256.4 717.7 1265.5 719.4 1272.8 720.5C1280.2 721.6 1290.1 722.6 1297.5 723.7C1304.9 724.8 1311.4 725.9 1317.2 727C1322.9 728.1 1328.3 729 1332 730.3C1335.6 731.6 1338.1 734.1 1339.3 734.9" fill="none" stroke="#ff3c14" stroke-width="2.3"/>
<path d="M1256.4 718.8C1261.9 719.4 1279.4 721 1289.3 722.1C1299.1 723.2 1307.3 723.5 1315.5 725.4C1323.7 727.3 1334.7 732.2 1338.5 733.6" fill="none" stroke="#ff3c14" stroke-width="1.6"/>
<path d="M1318.8 674.5C1322.1 675 1329.8 676.4 1338.5 677.8C1347.3 679.1 1360.4 681.5 1371.4 682.7C1382.3 683.9 1394.6 684.3 1404.2 685.2C1413.8 686 1422.5 686.8 1428.8 687.6C1435.1 688.4 1439.8 689.7 1442 690.1" fill="none" stroke="#ff3c14" stroke-width="2.3"/>
<path d="M1332 678.6C1339.9 679.5 1364.8 682.6 1379.6 684.3C1394.4 686.1 1410.2 687.9 1420.6 689.3C1431 690.6 1435.7 691.3 1442 692.5C1448.3 693.8 1455.1 695.6 1458.4 696.7C1461.7 697.7 1462.5 698.6 1461.7 699.1C1460.9 699.7 1458.1 700.1 1453.5 699.9C1448.8 699.8 1437 698.6 1433.8 698.3" fill="none" stroke="#ff3c14" stroke-width="2.3"/>
<path d="M1387.8 671.2C1385 673.1 1376.8 679.1 1371.4 682.7C1365.9 686.3 1360.4 689.5 1354.9 692.5C1349.5 695.6 1343.7 698.4 1338.5 700.8C1333.3 703.1 1326.2 705.5 1323.7 706.5" fill="none" stroke="#ff3c14" stroke-width="4"/>
<path d="M1328.7 686.8C1330.9 688 1336.1 691.6 1341.8 694.2C1347.6 696.8 1356 699.9 1363.2 702.4C1370.3 704.9 1378.8 707.2 1384.5 709C1390.2 710.7 1395.4 712.4 1397.6 713.1" fill="none" stroke="#ff3c14" stroke-width="2.6"/>
<path d="M1315.5 725.4C1316.6 724 1318.8 719.9 1322.1 717.2C1325.4 714.4 1330.3 711.3 1335.2 709C1340.2 706.6 1346.2 704.9 1351.7 703.2C1357.1 701.6 1363.4 699.8 1368.1 699.1C1372.7 698.4 1377.7 699.1 1379.6 699.1" fill="none" stroke="#ff3c14" stroke-width="2.3"/>
<path d="M1364 727.8C1366 726.6 1372.3 723.1 1376.3 720.5C1380.3 717.9 1384.2 714.7 1387.8 712.2C1391.3 709.8 1394.1 707.7 1397.6 705.7C1401.2 703.6 1403.9 701.6 1409.1 699.9C1414.3 698.3 1425.6 696.5 1428.8 695.8" fill="none" stroke="#ff3c14" stroke-width="2.3"/>
<path d="M1315.5 732C1317.2 733.6 1321.8 738.5 1325.4 741.8C1328.9 745.1 1334.1 748.4 1336.9 751.7C1339.6 754.9 1341.1 758 1341.8 761.5C1342.5 765.1 1342.1 768.6 1341 773C1339.9 777.4 1337.6 783.1 1335.2 787.8C1332.9 792.4 1330 796.8 1327 800.9C1324 805 1319.2 809.4 1317.2 812.4C1315.1 815.4 1314.6 817.3 1314.7 819C1314.8 820.6 1316.5 821.9 1318 822.3C1319.5 822.7 1322.1 822 1323.7 821.4C1325.4 820.9 1327.2 819.4 1327.8 819" fill="none" stroke="#ff3c14" stroke-width="2.3"/>
<path d="M759.7 817.9 L756.7 802 L777.9 798.9 L823.3 796.7 L824.8 810.3 L823.3 834.5" fill="none" stroke="#ff3c14" stroke-width="1.5"/>
<path d="M759.7 817.9 L762.7 830" fill="none" stroke="#ff3c14" stroke-width="1.6"/>
<path d="M762.7 814.8C765.3 813.8 772.1 810.7 777.9 808.8C783.7 806.9 794.3 804.4 797.6 803.5" fill="none" stroke="#ff3c14" stroke-width="1.8"/>
<path d="M762.7 817.9C766.5 817.2 775.4 815.5 785.5 814.1C795.6 812.7 817 810.3 823.3 809.5" fill="none" stroke="#ff3c14" stroke-width="2"/>
<path d="M764.2 824.7C770.3 823.6 790.8 820 800.6 817.9C810.5 815.7 819.5 812.8 823.3 811.8" fill="none" stroke="#ff3c14" stroke-width="1.8"/>
<path d="M752.9 832.3C753.8 831.9 755.8 829.7 758.2 830C760.6 830.3 761.5 832.9 767.3 833.8C773.1 834.7 783.2 834.9 793 835.3C802.9 835.7 820.8 835.9 826.4 836.1" fill="none" stroke="#ff3c14" stroke-width="4"/>
<path d="M752.9 832.3C754 832.8 756.8 834.3 759.7 835.3C762.6 836.3 768.5 837.8 770.3 838.3" fill="none" stroke="#ff3c14" stroke-width="1.8"/>
<path d="M862.7 762.6C867.5 760.9 881.7 755.5 891.5 752.7C901.4 749.9 912.2 747.9 921.8 745.9C931.4 743.9 944.5 741.5 949.1 740.6" fill="none" stroke="#ff3c14" stroke-width="3.4"/>
<path d="M865.8 760.3C872.6 758.8 892.5 754.2 906.7 751.2C920.8 748.2 943.3 743.6 950.6 742.1" fill="none" stroke="#ff3c14" stroke-width="2"/>
<path d="M949.1 739.1C949.8 740.6 952.2 744.6 953.6 748.2C955 751.7 957 757.3 957.4 760.3C957.8 763.3 956.2 765.4 955.9 766.4" fill="none" stroke="#ff3c14" stroke-width="1.5"/>
<path d="M955.9 766.4C950.2 766.7 932.6 768 921.8 768.6C911.1 769.3 900.4 770.3 891.5 770.2C882.7 770 873.5 768.6 868.8 767.9C864.1 767.1 864.4 766 863.5 765.6" fill="none" stroke="#ff3c14" stroke-width="1.5"/>
<path d="M862.7 761.8C862.6 763.3 861.9 767.9 862 770.9C862 773.9 862.9 778.5 863 780" fill="none" stroke="#ff3c14" stroke-width="2"/>
<path d="M967.1 865.3C973.5 864.3 992.4 861.3 1005.7 859.6C1019 857.8 1033 856 1046.7 854.6C1060.4 853.3 1076.8 851.6 1087.8 851.3C1098.7 851.1 1106.7 852.4 1112.4 853C1118.2 853.5 1120.6 854.4 1122.3 854.6" fill="none" stroke="#ff3c14" stroke-width="2.3"/>
<path d="M968.7 874.3C974.9 872.8 991.3 867.9 1005.7 865.3C1020 862.7 1038.5 860.2 1054.9 858.7C1071.4 857.2 1092.7 856.4 1104.2 856.3C1115.7 856.1 1120.6 857.6 1123.9 857.9" fill="none" stroke="#ff3c14" stroke-width="2.3"/>
<path d="M977.8 869.4C985.2 869 1006.5 868 1022.1 866.9C1037.7 865.9 1054.4 863.3 1071.4 862.8C1088.3 862.4 1115.2 864.2 1123.9 864.5" fill="none" stroke="#ff3c14" stroke-width="2.3"/>
<path d="M997.5 866.9C1005.7 867.2 1031.7 868.9 1046.7 868.6C1061.8 868.3 1080.9 865.9 1087.8 865.3" fill="none" stroke="#ff3c14" stroke-width="1.6"/>
<path d="M1105.8 864.5C1109.7 866.4 1120.9 872.1 1128.8 876C1136.8 879.8 1145 883.4 1153.5 887.5C1161.9 891.6 1175.4 898.4 1179.7 900.6" fill="none" stroke="#ff3c14" stroke-width="3.6"/>
<path d="M994.2 918.7C1001.6 917.8 1022.9 915.1 1038.5 913.7C1054.1 912.4 1071.4 911.8 1087.8 910.5C1104.2 909.1 1121.6 907 1137 905.5C1152.5 904 1173.3 902.1 1180.6 901.4" fill="none" stroke="#ff3c14" stroke-width="3.2"/>
<path d="M995.8 876.8C1000.2 877.6 1009.5 881 1022.1 881.7C1034.7 882.4 1054.9 881.5 1071.4 880.9C1087.8 880.4 1102.8 878.7 1120.6 878.4C1138.4 878.2 1168.5 879.1 1178.1 879.3" fill="none" stroke="#ff3c14" stroke-width="1.8"/>
<path d="M995.8 867.8C996.1 871.1 996.7 880.6 997.5 887.5C998.3 894.3 1000.1 903.9 1000.8 908.8C1001.4 913.7 1001.4 915.7 1001.6 917" fill="none" stroke="#ff3c14" stroke-width="2.3"/>
<path d="M975.3 877.6C976.5 880.6 980.1 889.9 982.7 895.7C985.3 901.4 988.9 907.7 990.9 912.1C993 916.5 994.3 920.3 995 922" fill="none" stroke="#ff3c14" stroke-width="2.3"/>
<path d="M977.8 885.8 L989.3 908.8" fill="none" stroke="#ff3c14" stroke-width="1.6"/>
<path d="M994.2 877.6 L994.2 910.5" fill="none" stroke="#ff3c14" stroke-width="1.6"/>
<path d="M1137 875.2 L1161.7 871.1 L1178.9 868.6 L1171.5 877.6 L1166.6 889.1 L1164.1 899.8 L1151 899" fill="none" stroke="#ff3c14" stroke-width="1.6"/>
<path d="M975.3 879.3C973.8 882 968.7 889.7 966.3 895.7C963.8 901.7 961.5 908.5 960.5 915.4C959.6 922.2 959.8 929.1 960.5 936.7C961.2 944.4 963.4 954 964.6 961.4C965.9 968.8 967.4 975.6 967.9 981.1C968.5 986.5 967.9 992 967.9 994.2" fill="none" stroke="#ff3c14" stroke-width="1.8"/>
<path d="M1038.5 859.2C1044 859.4 1060.4 860.7 1071.4 860.5C1082.3 860.4 1098.7 858.6 1104.2 858.2" fill="none" stroke="#ff3c14" stroke-width="3.6"/>
<path d="M981.1 877.6C982.1 881.2 985.4 892.1 987.6 899C989.8 905.8 993.1 915.4 994.2 918.7" fill="none" stroke="#ff3c14" stroke-width="2"/>
<path d="M976.9 880.9C977.8 883.9 979.8 892.9 981.9 899C983.9 905 988 914 989.3 917" fill="none" stroke="#ff3c14" stroke-width="1.6"/>
<path d="M1104.2 856.3C1106.4 855.7 1114.3 853.3 1117.3 853C1120.4 852.7 1122 853 1122.3 854.6C1122.5 856.3 1121.4 861.5 1119 862.8C1116.5 864.2 1109.4 862.8 1107.5 862.8" fill="none" stroke="#ff3c14" stroke-width="1.8"/>
<path d="M969.6 866.9C973.4 867.6 987.1 870.9 992.5 871.1C998 871.2 1000.8 868.3 1002.4 867.8" fill="none" stroke="#ff3c14" stroke-width="1.8"/>
<path d="M1285.6 467.8C1285.7 477 1286.6 504.8 1286.7 523.3C1286.8 541.9 1286.3 563.1 1286.1 578.9C1285.9 594.6 1285.4 611.3 1285.3 617.8" fill="none" stroke="#ff3c14" stroke-width="2"/>
<path d="M1050.2 267.9C1048.6 272 1043.4 283 1040.7 292.5C1038 302 1034.4 313.6 1034.1 324.7C1033.7 335.7 1035.5 348.4 1038.8 358.8C1042.1 369.2 1047 378.7 1053.9 387.2C1060.9 395.7 1071.3 404.6 1080.5 409.9C1089.6 415.3 1099.4 418 1108.9 419.4C1118.3 420.8 1128.4 420.7 1137.3 418.4C1146.1 416.2 1154.6 411.7 1161.9 406.1C1169.2 400.6 1176.7 392.6 1180.8 385.3C1184.9 378 1185.6 366.4 1186.5 362.6" fill="none" stroke="#ff3c14" stroke-width="1.8"/>
<path d="M1160 258.4C1160.9 257 1163.2 251.6 1165.7 249.9C1168.2 248.2 1172 247.5 1175.2 248C1178.3 248.5 1182.1 250.4 1184.6 252.7C1187.1 255.1 1189.8 259 1190.3 262.2C1190.8 265.4 1189.4 269 1187.5 271.7C1185.6 274.3 1180.4 277.2 1178.9 278.3" fill="none" stroke="#ff3c14" stroke-width="2.4"/>
<path d="M1071 254.6C1073.5 254.3 1081.4 253.7 1086.1 252.7C1090.9 251.8 1097.2 249.6 1099.4 248.9" fill="none" stroke="#ff3c14" stroke-width="1.6"/>
<path d="M1205.6 364.4C1204.2 367.2 1201.4 375.1 1197.2 381.1C1193.1 387.1 1186.6 394.8 1180.6 400.6C1174.5 406.3 1167.1 411.7 1161.1 415.8C1155.1 420 1147.2 423.9 1144.4 425.6" fill="none" stroke="#ff3c14" stroke-width="1.8"/>
<path d="M1177.8 565C1179.9 562.5 1186.3 555 1190.3 549.7C1194.2 544.4 1199.5 535.8 1201.4 533.1" fill="none" stroke="#ff3c14" stroke-width="2"/>
</g>
</svg>
</body>
</html>
